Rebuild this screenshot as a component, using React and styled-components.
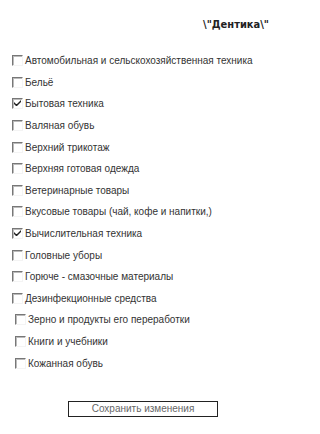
import React from 'react'
import styled, { createGlobalStyle } from 'styled-components'

const GlobalStyle = createGlobalStyle`
  body {
    margin: 0;
    background: #fff;
    font-family: 'Liberation Sans', Arial, sans-serif;
  }
`

const items = [
  { label: 'Автомобильная и сельскохозяйственная техника' },
  { label: 'Бельё' },
  { label: 'Бытовая техника', checked: true },
  { label: 'Валяная обувь' },
  { label: 'Верхний трикотаж' },
  { label: 'Верхняя готовая одежда' },
  { label: 'Ветеринарные товары' },
  { label: 'Вкусовые товары (чай, кофе и напитки,)' },
  { label: 'Вычислительная техника', checked: true },
  { label: 'Головные уборы' },
  { label: 'Горюче - смазочные материалы' },
  { label: 'Дезинфекционные средства' },
  { label: 'Зерно и продукты его переработки', shift: true },
  { label: 'Книги и учебники', shift: true },
  { label: 'Кожанная обувь', shift: true },
]

export default function App() {
  return (
    <>
      <GlobalStyle />
      <Page>
        <Title>\"Дентика\"</Title>
        <List>
          {items.map((item) => (
            <Row key={item.label} $shift={item.shift}>
              <Box>
                {item.checked && (
                  <svg width="7" height="7" viewBox="0 0 7 7">
                    <path d="M0 2 L0 4 L2 6 L3 6 L7 2 L7 0 L3 4 L2 4 Z" fill="#222" />
                  </svg>
                )}
              </Box>
              <Label>{item.label}</Label>
            </Row>
          ))}
        </List>
        <ButtonWrapper>
          <SaveButton>Сохранить изменения</SaveButton>
        </ButtonWrapper>
      </Page>
    </>
  )
}

const Page = styled.div`
  width: 276px;
  height: 434px;
  box-sizing: border-box;
  padding: 17px 7px 0 12px;
`

const Title = styled.div`
  text-align: right;
  font-family: 'DejaVu Sans Condensed', 'DejaVu Sans', sans-serif;
  font-weight: bold;
  font-size: 11px;
  color: #222;
  line-height: 16px;
`

const List = styled.div`
  display: flex;
  flex-direction: column;
  margin-top: 17px;
`

const Row = styled.label`
  display: flex;
  align-items: center;
  height: 21.6px;
  padding-left: ${(p) => (p.$shift ? '3px' : '0')};
`

const Box = styled.span`
  display: flex;
  align-items: center;
  justify-content: center;
  width: 11px;
  height: 11px;
  box-sizing: border-box;
  border-top: 1px solid #777;
  border-left: 1px solid #777;
  border-right: 1px solid #f4f4f4;
  border-bottom: 1px solid #f4f4f4;
  box-shadow: inset 1px 1px 0 #bbb;
  background: #fff;
  flex-shrink: 0;
`

const Label = styled.span`
  margin-left: 2px;
  font-size: 10px;
  color: #333;
  white-space: nowrap;
`

const ButtonWrapper = styled.div`
  display: flex;
  padding-left: 56px;
  margin-top: 27px;
`

const SaveButton = styled.button`
  width: 150px;
  height: 16px;
  padding: 0;
  border: 1px solid #222;
  background: #fff;
  font-family: 'Liberation Sans', Arial, sans-serif;
  font-size: 10px;
  color: #666;
  line-height: 14px;
`
